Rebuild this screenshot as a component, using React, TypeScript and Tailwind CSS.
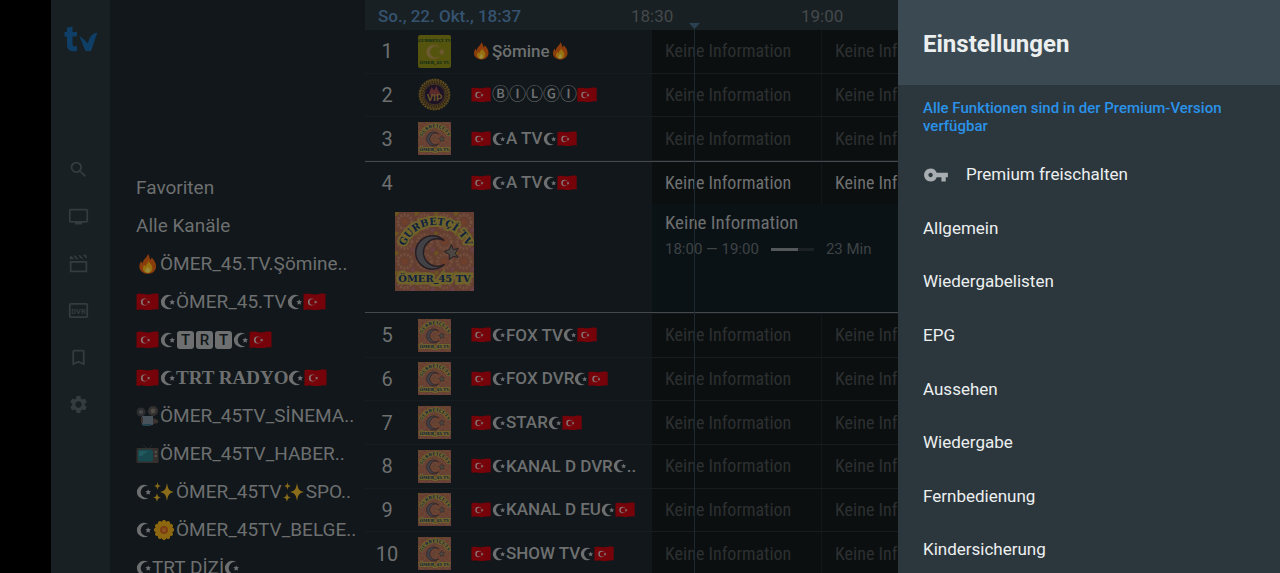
import { Fragment, useId, type ReactNode } from 'react'
import { MdBookmarkBorder, MdSearch, MdSettings, MdVpnKey } from 'react-icons/md'

const categories = [
  'Favoriten',
  'Alle Kanäle',
  '🔥ÖMER_45.TV.Şömine..',
  '🇹🇷☪ÖMER_45.TV☪🇹🇷',
  '🇹🇷☪[T][R][T]☪🇹🇷',
  '🇹🇷☪{TRT RADYO}☪🇹🇷',
  '📽ÖMER_45TV_SİNEMA..',
  '📺ÖMER_45TV_HABER..',
  '☪✨ÖMER_45TV✨SPO..',
  '☪🌼ÖMER_45TV_BELGE..',
  '☪TRT DİZİ☪',
]

type Logo = 'yellow' | 'vip' | 'pink'
type Channel = { no: number; name: string; logo: Logo }

const topChannels: Channel[] = [
  { no: 1, name: '🔥Şömine🔥', logo: 'yellow' },
  { no: 2, name: '🇹🇷ⒷⒾⓁⒼⒾ🇹🇷', logo: 'vip' },
  { no: 3, name: '🇹🇷☪A TV☪🇹🇷', logo: 'pink' },
]

const bottomChannels: Channel[] = [
  { no: 5, name: '🇹🇷☪FOX TV☪🇹🇷', logo: 'pink' },
  { no: 6, name: '🇹🇷☪FOX DVR☪🇹🇷', logo: 'pink' },
  { no: 7, name: '🇹🇷☪STAR☪🇹🇷', logo: 'pink' },
  { no: 8, name: '🇹🇷☪KANAL D DVR☪..', logo: 'pink' },
  { no: 9, name: '🇹🇷☪KANAL D EU☪🇹🇷', logo: 'pink' },
  { no: 10, name: '🇹🇷☪SHOW TV☪🇹🇷', logo: 'pink' },
]

const settings = [
  'Allgemein',
  'Wiedergabelisten',
  'EPG',
  'Aussehen',
  'Wiedergabe',
  'Fernbedienung',
  'Kindersicherung',
]

/* Emoji drawings, all on a 24x20 box */

const emoji: Record<string, ReactNode> = {
  '🇹🇷': (
    <>
      <path d="M0.5 2.2C5 .6 8 2.600 12 2.400S19 .8 22.5 2v15.600c-3.500-1.200-6.500.5-10.500.5S5 16.600.500 18z" fill="#760309" />
      <circle cx="8.500" cy="10" r="3.600" fill="#85797a" />
      <circle cx="9.500" cy="10" r="2.900" fill="#760309" />
      <path d="m12.600 8.400.5 1.100 1.200.1-.9.8.3 1.200-1.100-.6-1 .6.200-1.200-.8-.8 1.200-.1z" fill="#85797a" />
    </>
  ),
  '🔥': (
    <>
      <path d="M12 0c2 2 1 4 2.500 5.800.8-.6 1-1.600.9-2.600 3 2.800 5 6.300 4.600 10-.4 3.600-3.600 6.600-8 6.600s-8.200-2.600-8.600-6.600c-.2-2.700 1-4.800 1.800-6.200.3 1.300.8 2 1.600 2.400C6.600 5.500 11 4 12 0z" fill="#8a3c0c" />
      <path d="M12.600 6.500c.3 2.500 3.600 3.800 3.800 7.200.2 3-1.800 5.200-4.700 5.200s-5-2-4.800-4.600c.1-1.600.8-2.400 1.400-3.200.4 1 .9 1.400 1.600 1.500C9.500 10 12.600 9.500 12.600 6.500z" fill="#97700f" />
      <path d="M12 12.500c.4 1.800 1.800 2.200 1.800 3.900s-1 2.400-2.200 2.400-2.200-.9-2.100-2.200c.1-1.700 2.100-2 2.500-4.100z" fill="#9a8b3c" />
    </>
  ),
  '📽': (
    <>
      <circle cx="5" cy="6" r="4.500" fill="#2b2d30" />
      <circle cx="5" cy="6" r="2" fill="#474747" />
      <circle cx="17" cy="5" r="5" fill="#33312f" />
      <circle cx="17" cy="5" r="2.400" fill="#4f4b47" />
      <path d="M6 10h11v9H6z" fill="#48525a" />
      <path d="M17 12l5 2v3l-5 1zM5 11h2v6H5z" fill="#3a3230" />
      <path d="M7 18h8v2H7z" fill="#24414f" />
    </>
  ),
  '📺': (
    <>
      <path d="M7 1l5 4 4-4" fill="none" stroke="#22282a" />
      <rect x=".5" y="4" width="22" height="15" rx="1" fill="#35302d" />
      <rect x="2" y="5.500" width="15" height="12" rx="2" fill="#17494f" />
      <path d="M3 7h9l-6 5H3z" fill="#21595d" />
      <circle cx="19.800" cy="8" r="1.300" fill="#55504b" />
      <circle cx="19.800" cy="12" r="1.300" fill="#55504b" />
    </>
  ),
  '✨': (
    <>
      <path d="M15 1c1 6 2 8 7 9-5 1-6 3-7 9-1-6-2-8-7-9 5-1 6-3 7-9z" fill="#8a6c1a" />
      <path d="M5.500 0c.5 3 1 3.500 3.500 4-2.500.5-3 1-3.500 4C5 5 4.500 4.500 2 4c2.500-.5 3-1 3.500-4zM5 11c.6 3 1.200 4 4 4.500-2.800.5-3.400 1.500-4 4.500-.6-3-1.200-4-4-4.500 2.800-.5 3.400-1.500 4-4.500z" fill="#8a6c1a" />
    </>
  ),
  '🌼': (
    <>
      {Array.from({ length: 12 }).map((_, i) => (
        <ellipse key={i} cx="12" cy="3.500" rx="2.400" ry="3.600" fill="#8d6810" transform={`rotate(${i * 30} 12 10)`} />
      ))}
      <circle cx="12" cy="10" r="4" fill="#7d3d14" />
      <circle cx="12" cy="10" r="2" fill="#8c5322" />
    </>
  ),
}

function Crescent({ large }: { large?: boolean }) {
  return (
    <svg viewBox="0 0 16 16" className={large ? 'size-4 shrink-0' : 'size-[14px] shrink-0'} aria-label="☪">
      <path d="M12.500 2.300A7.200 7.200 0 1 0 12.500 13.700 6 6 0 1 1 12.500 2.300z" fill="currentColor" />
      <path d="m12.200 5.200.8 1.800 2.100.2-1.500 1.400.4 2.100-1.800-1-1.800 1 .4-2.100L9.300 7.200l2.100-.2z" fill="currentColor" />
    </svg>
  )
}

// [X] is a boxed letter, {...} is serif text
const tokens = /(🇹🇷|🔥|📽|📺|✨|🌼|☪|\[.\]|\{.*?\})/u

function Label({ text, large }: { text: string; large?: boolean }) {
  return (
    <span className="flex items-center whitespace-pre">
      {text.split(tokens).map((part, i) => {
        if (!part) return null
        if (part === '☪') return <Crescent key={i} large={large} />
        if (emoji[part]) {
          return (
            <svg key={i} viewBox="0 0 24 20" className={large ? 'w-6 h-5 shrink-0' : 'w-[21px] h-[18px] shrink-0'} aria-label={part}>
              {emoji[part]}
            </svg>
          )
        }
        if (part[0] === '[') {
          return (
            <span key={i} className="mx-px w-[17px] h-[18px] rounded-[3px] bg-[#6d6f70] text-[#11171a] text-[15px] leading-[18px] font-medium text-center">
              {part[1]}
            </span>
          )
        }
        if (part[0] === '{') {
          return (
            <span key={i} className="font-['Liberation_Serif',serif] font-bold">
              {part.slice(1, -1)}
            </span>
          )
        }
        return <Fragment key={i}>{part}</Fragment>
      })}
    </span>
  )
}

function StationLogo({ kind, className }: { kind: Logo; className: string }) {
  const id = useId()
  if (kind === 'vip') {
    return (
      <svg viewBox="0 0 80 80" className={className}>
        <circle cx="40" cy="40" r="36" fill="#241a20" stroke="#5f4c1f" strokeWidth="5" strokeDasharray="5 2" />
        <circle cx="40" cy="40" r="31" fill="none" stroke="#54431c" strokeWidth="8" />
        <circle cx="40" cy="40" r="31" fill="none" stroke="#2b2118" strokeWidth="5" strokeDasharray="3 3" />
        <circle cx="40" cy="40" r="25" fill="#1d1326" stroke="#4c3a22" strokeWidth="2" />
        <path d="M27 36l6-14 6 8 6-11 3 10 6 7-4 8H31z" fill="#5b2a2c" />
        <text x="40" y="56" textAnchor="middle" fontSize="24" fontWeight="700" fill="#66522a" fontFamily="Roboto, sans-serif">VIP</text>
      </svg>
    )
  }
  const yellow = kind === 'yellow'
  return (
    <svg viewBox="0 0 80 80" className={className}>
      <defs>
        <pattern id={`${id}p`} width="20" height="20" patternUnits="userSpaceOnUse">
          <rect width="20" height="20" fill="#643e30" />
          <circle cx="10" cy="10" r="7" fill="none" stroke="#74503f" strokeWidth="3" strokeDasharray="2 1.500" />
          <circle cx="10" cy="10" r="3" fill="#703f2b" />
          <circle cx="0" cy="0" r="4" fill="#6b5420" />
          <circle cx="20" cy="20" r="4" fill="#6b4148" />
        </pattern>
        <path id={`${id}c`} d="M9 38A33 33 0 0 1 73 38" />
      </defs>
      <rect width="80" height="80" rx={yellow ? 5 : 0} fill={yellow ? '#55540f' : `url(#${id}p)`} />
      {yellow ? (
        <text x="40" y="16" textAnchor="middle" fontSize="10" fontWeight="700" fill="#0b2a16" fontFamily="DejaVu Serif, serif">GURBETÇİ TV</text>
      ) : (
        <text fontSize="10" fontWeight="700" fill="#0d2140" stroke="#6f632b" strokeWidth="4" paintOrder="stroke" fontFamily="DejaVu Serif, serif">
          <textPath href={`#${id}c`} startOffset="50%" textAnchor="middle">GURBETÇİ TV</textPath>
        </text>
      )}
      <path d="M50 29A17 17 0 1 0 50 53 14 14 0 1 1 50 29z" fill={yellow ? '#6a5c34' : '#424146'} stroke={yellow ? '#72552c' : '#251f23'} strokeWidth="1.500" />
      <path d="m57 33 2 5 5-1-3 5 3 4-5-1-4 3v-5l-5-3 5-2z" fill={yellow ? '#6e5a35' : '#4c4742'} stroke={yellow ? '#72552c' : '#251f23'} />
      <text x="40" y="71" textAnchor="middle" fontSize="10" fontWeight="700" fill={yellow ? '#0b2a16' : '#0d2140'} stroke={yellow ? 'none' : '#6f632b'} strokeWidth="5" paintOrder="stroke" fontFamily="DejaVu Serif, serif">
        ÖMER_45 TV
      </text>
    </svg>
  )
}

function Brand() {
  return (
    <svg viewBox="0 0 34 26" className="w-[34px] h-[26px]" aria-label="tv">
      <path d="M3 1.500 8.500.5V6H13v4.500H8.500v7.500c0 2 1 2.700 4.500 2.200V25C6 26 3 24 3 18.500v-8H.5V6H3z" fill="#0f3e66" />
      <path d="M15 9.500 19.500 13l4.500 4.500c1-5.500 3.500-10 9.500-11C31 12 29.500 19 27 25h-5.500c-2.500-5.500-4-10.500-6.500-15.500z" fill="#0f3e66" />
    </svg>
  )
}

const navIcons: { name: string; icon: ReactNode }[] = [
  { name: 'Suche', icon: <MdSearch className="size-[21px]" /> },
  {
    name: 'TV',
    icon: (
      <svg viewBox="0 0 24 24" className="size-[21px]" fill="currentColor">
        <path d="M21 3H3a2 2 0 0 0-2 2v12c0 1.100.9 2 2 2h5v2h8v-2h5a2 2 0 0 0 2-2V5a2 2 0 0 0-2-2zm0 14H3V5h18z" />
      </svg>
    ),
  },
  {
    name: 'Filme',
    icon: (
      <svg viewBox="0 0 24 24" className="size-[21px]" fill="currentColor">
        <path d="M3 9h18a1 1 0 0 1 1 1v11a1 1 0 0 1-1 1H3a1 1 0 0 1-1-1V10a1 1 0 0 1 1-1zm1 2v9h16v-9z" />
        <path d="M2 4l2-.5L7 7H2zM6 3h2.500l3.500 4H9.500zM11.500 2.500H14L17.500 6.500H15zM17 2h3.500L22 6h-1.500z" />
      </svg>
    ),
  },
  {
    name: 'Aufnahmen',
    icon: (
      <svg viewBox="0 0 24 24" className="size-[21px]" fill="none" stroke="currentColor">
        <rect x="2" y="4.500" width="20" height="15" rx="1" strokeWidth="2" />
        <text x="12" y="15.500" textAnchor="middle" fontSize="8.500" fontWeight="700" fill="currentColor" stroke="none" fontFamily="Roboto, sans-serif">DVR</text>
      </svg>
    ),
  },
  { name: 'Merkliste', icon: <MdBookmarkBorder className="size-[21px]" /> },
  { name: 'Einstellungen', icon: <MdSettings className="size-[21px]" /> },
]

function Programmes({ active }: { active?: boolean }) {
  return (
    <div className={`flex flex-1 min-w-0 overflow-hidden bg-[#0b0f10] text-lg font-['Roboto_Condensed','Liberation_Sans_Narrow',Roboto,sans-serif] ${active ? 'text-[#6f7172]' : 'text-[#2d3031]'}`}>
      {[0, 1].map((slot) => (
        <div key={slot} className="flex items-center w-[170px] shrink-0 pl-[13px] border-r border-[#11171a] whitespace-nowrap">
          Keine Information
        </div>
      ))}
    </div>
  )
}

function ChannelRow({ channel }: { channel: Channel }) {
  return (
    <div className="flex border-b border-[#161c1f]">
      <div className="flex items-center w-[287px] shrink-0">
        <span className="w-11 text-center text-xl">{channel.no}</span>
        <StationLogo kind={channel.logo} className="ml-[9px] mr-5 size-[33px] shrink-0" />
        <span className="text-[17px] font-medium">
          <Label text={channel.name} />
        </span>
      </div>
      <Programmes />
    </div>
  )
}

export default function App() {
  return (
    <div className="flex h-screen overflow-hidden bg-black pl-[51px] font-[Roboto,'Noto_Sans_CJK_JP',sans-serif] text-[#6d6f70]">
      <nav className="flex flex-col items-center w-[59px] shrink-0 bg-[#182023]">
        <div className="pt-[26px] pb-[94px]">
          <Brand />
        </div>
        {navIcons.map(({ name, icon }) => (
          <button key={name} aria-label={name} className="grid place-items-center size-[47px] shrink-0 pr-1 text-[#353b3e]">
            {icon}
          </button>
        ))}
      </nav>

      <section className="w-[255px] shrink-0 bg-[#11171a] pt-[169px] pl-[26px] overflow-hidden">
        {categories.map((name) => (
          <button key={name} className="flex items-center h-[38px] text-[19px]">
            <Label text={name} large />
          </button>
        ))}
      </section>

      {/* Programme guide */}
      <main className="relative flex-1 min-w-0 overflow-hidden bg-[#11171a]">
        <header className="flex items-center h-[30px] bg-[#182023] pt-[3px] pl-[13px] text-[17px] text-[#45494b]">
          <time className="w-[253px] shrink-0 font-medium text-[#355370]">So., 22. Okt., 18:37</time>
          <span className="w-[170px] shrink-0">18:30</span>
          <span>19:00</span>
        </header>

        <div className="grid grid-rows-3 h-[131px]">
          {topChannels.map((channel) => (
            <ChannelRow key={channel.no} channel={channel} />
          ))}
        </div>

        {/* Selected channel */}
        <div className="flex h-[152px] border-y border-[#45494b]">
          <div className="w-[287px] shrink-0">
            <div className="flex items-center h-[42px]">
              <span className="w-11 text-center text-xl">4</span>
              <span className="ml-[62px] text-[17px] font-medium">
                <Label text="🇹🇷☪A TV☪🇹🇷" />
              </span>
            </div>
            <StationLogo kind="pink" className="mt-2 ml-[30px] size-[79px]" />
          </div>
          <div className="flex flex-col flex-1 min-w-0 bg-[#0b1216]">
            <div className="flex h-[42px]">
              <Programmes active />
            </div>
            <div className="px-[13px] pt-[7px]">
              <p className="text-[19px] leading-6 font-['Roboto_Condensed','Liberation_Sans_Narrow',Roboto,sans-serif]">Keine Information</p>
              <div className="flex items-center pt-0.5 text-[15px] leading-6 text-[#3e4345]">
                <span>18:00 — 19:00</span>
                <span className="mx-3 w-[43px] h-[3px] bg-[#1b2124]">
                  <span className="block w-[27px] h-full bg-[#54585a]" />
                </span>
                <span>23 Min</span>
              </div>
            </div>
          </div>
        </div>

        <div className="grid grid-rows-6 h-[263px] pt-px">
          {bottomChannels.map((channel) => (
            <ChannelRow key={channel.no} channel={channel} />
          ))}
        </div>

        {/* Current time marker */}
        <div className="absolute top-[23px] bottom-0 left-[324px] flex flex-col items-center w-[11px] pointer-events-none">
          <svg viewBox="0 0 11 6" className="w-[11px] h-[6px] shrink-0">
            <path d="M0 0h11L5.500 6z" fill="#2b4151" />
          </svg>
          <div className="w-px flex-1 bg-[#1c2931]" />
        </div>
      </main>

      <aside className="w-[382px] shrink-0 overflow-hidden bg-[#2c373d] text-[#eceff0]">
        <h1 className="flex items-center h-[85px] pl-[25px] pt-0.5 bg-[#3b4a52] text-2xl font-bold">Einstellungen</h1>
        <p className="px-[25px] pt-[14px] pb-[13px] text-[15px] leading-[18px] font-medium text-[#2a92e8]">
          Alle Funktionen sind in der Premium-Version verfügbar
        </p>
        <div className="grid grid-rows-8 h-[429px] text-[17px]">
          <button className="flex items-center pl-[25px] text-left">
            <MdVpnKey className="size-[26px] mr-[17px] text-[#a7adb0]" />
            Premium freischalten
          </button>
          {settings.map((item) => (
            <button key={item} className="flex items-center pl-[25px] text-left">
              {item}
            </button>
          ))}
        </div>
      </aside>
    </div>
  )
}
